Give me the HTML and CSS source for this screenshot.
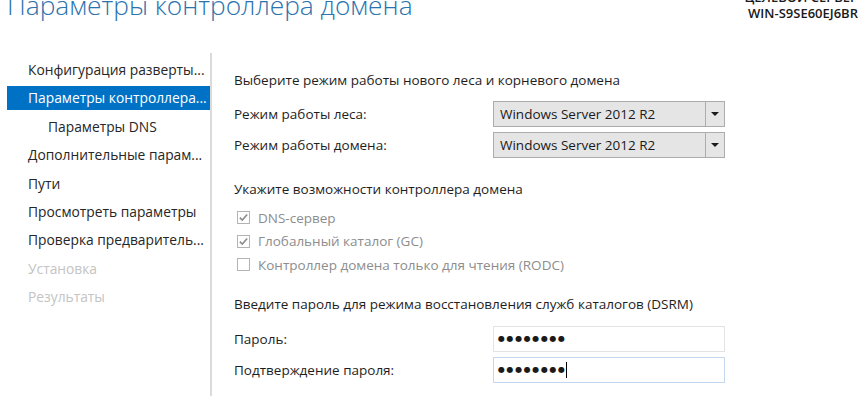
FILE: index.html
```html
<!DOCTYPE html>
<html>
<head>
  <title>Параметры контроллера домена</title>

  <!-- Page styles -->
  <link rel="stylesheet" href="styles.css">
</head>
<body>

  <!-- Wizard header: page title and target server -->
  <div class="header">
    <h1 class="title">Параметры контроллера домена</h1>
    <div class="target">
      <div class="target-label">ЦЕЛЕВОЙ СЕРВЕР</div>
      <div class="target-name">WIN-S9SE60EJ6BR</div>
    </div>
  </div>

  <div class="wizard">

    <!-- Left step list -->
    <ul class="steps">
      <li>Конфигурация разверты...</li>
      <li class="active">Параметры контроллера...</li>
      <li class="sub">Параметры DNS</li>
      <li>Дополнительные парам...</li>
      <li>Пути</li>
      <li>Просмотреть параметры</li>
      <li>Проверка предваритель...</li>
      <li class="disabled">Установка</li>
      <li class="disabled">Результаты</li>
    </ul>

    <!-- Main form -->
    <div class="content">
      <div class="section-title">Выберите режим работы нового леса и корневого домена</div>

      <div class="field first">
        <span class="label">Режим работы леса:</span>
        <div class="combo">
          <span class="combo-value">Windows Server 2012 R2</span>
          <span class="combo-btn"><span class="arrow"></span></span>
        </div>
      </div>
      <div class="field">
        <span class="label">Режим работы домена:</span>
        <div class="combo">
          <span class="combo-value">Windows Server 2012 R2</span>
          <span class="combo-btn"><span class="arrow"></span></span>
        </div>
      </div>

      <div class="section-title gap">Укажите возможности контроллера домена</div>

      <div class="checks">
        <label class="check">
          <span class="box">
            <svg width="11" height="11" viewBox="0 0 11 11"><path d="M1.8 5.6 L4.3 8.1 L9.2 2.6" fill="none" stroke="#8a8a8a" stroke-width="1.5"/></svg>
          </span>
          DNS-сервер
        </label>
        <label class="check">
          <span class="box">
            <svg width="11" height="11" viewBox="0 0 11 11"><path d="M1.8 5.6 L4.3 8.1 L9.2 2.6" fill="none" stroke="#8a8a8a" stroke-width="1.5"/></svg>
          </span>
          Глобальный каталог (GC)
        </label>
        <label class="check">
          <span class="box"></span>
          Контроллер домена только для чтения (RODC)
        </label>
      </div>

      <div class="section-title gap-small">Введите пароль для режима восстановления служб каталогов (DSRM)</div>

      <div class="field first-input">
        <span class="label">Пароль:</span>
        <div class="input">●●●●●●●●</div>
      </div>
      <div class="field">
        <span class="label">Подтверждение пароля:</span>
        <div class="input focused">●●●●●●●●<span class="caret"></span></div>
      </div>
    </div>

  </div>

</body>
</html>
```

FILE: styles.css
```css
/* Base page */
body {
  margin: 0;
  background-color: #fff;
  font-family: "Open Sans", "Noto Sans", sans-serif;
  font-size: 13.5px;
  color: #1e1e1e;
  overflow: hidden;
}

/* Header row */
.header {
  display: flex;
  justify-content: space-between;
  margin-top: -13px;
  height: 66px;
}

.title {
  margin: 0 0 0 7px;
  font-size: 26.3px;
  font-weight: 300;
  line-height: 36px;
  white-space: nowrap;
  color: #2a73ad;
}

/* Target server block */
.target {
  padding-right: 4px;
  text-align: right;
  font-weight: 600;
  font-size: 13px;
  line-height: 16px;
  color: #1a1a1a;
}

.target-label {
  margin-top: 2px;
}

/* Wizard body */
.wizard {
  display: flex;
}

/* Step list */
.steps {
  list-style: none;
  margin: 0;
  padding: 5px 0 0 7px;
  width: 203px;
  height: 338px;
  border-right: 2px solid #dadada;
  font-size: 13.8px;
}

.steps li {
  height: 24px;
  line-height: 24px;
  margin-bottom: 4.4px;
  padding-left: 21px;
  white-space: nowrap;
  color: #262626;
}

.steps li.active {
  background-color: #0072c6;
  color: #fff;
}

.steps li.sub {
  padding-left: 41px;
}

.steps li.disabled {
  color: #c4c4c4;
}

/* Form area */
.content {
  padding: 17px 0 0 22px;
}

.section-title {
  height: 20px;
  line-height: 20px;
  white-space: nowrap;
  color: #1e1e1e;
}

.section-title.gap {
  margin-top: 21px;
}

.section-title.gap-small {
  margin-top: 17px;
}

.field {
  display: flex;
  align-items: center;
  margin-top: 5px;
}

.field.first {
  margin-top: 11px;
}

.field.first-input {
  margin-top: 12px;
}

.label {
  width: 259px;
}

/* Combo box */
.combo {
  display: flex;
  width: 230px;
  height: 24px;
  border: 1px solid #acacac;
  background-color: #e5e5e5;
}

.combo-value {
  flex: 1;
  padding-left: 6px;
  line-height: 24px;
  color: #1a1a1a;
}

.combo-btn {
  width: 18px;
  border-left: 1px solid #acacac;
  display: flex;
  align-items: center;
  justify-content: center;
}

.arrow {
  width: 0;
  height: 0;
  border-left: 4px solid transparent;
  border-right: 4px solid transparent;
  border-top: 4px solid #1a1a1a;
}

/* Checkboxes */
.checks {
  margin-top: 7px;
}

.check {
  display: flex;
  align-items: center;
  gap: 8px;
  height: 23.5px;
  padding-left: 3px;
  white-space: nowrap;
  color: #8d8d8d;
}

.box {
  display: flex;
  align-items: center;
  justify-content: center;
  width: 11px;
  height: 11px;
  border: 1px solid #b4b4b4;
  background-color: #fff;
}

/* Password inputs */
.input {
  display: flex;
  align-items: center;
  width: 226px;
  height: 24px;
  padding-left: 4px;
  border: 1px solid #e3e3e3;
  font-family: "DejaVu Sans", sans-serif;
  font-size: 8px;
  letter-spacing: 1.6px;
  color: #1a1a1a;
}

.input.focused {
  border-color: #c3d7ee;
}

.caret {
  display: inline-block;
  width: 1px;
  height: 16px;
  margin-left: -1px;
  background-color: #000;
}
```
